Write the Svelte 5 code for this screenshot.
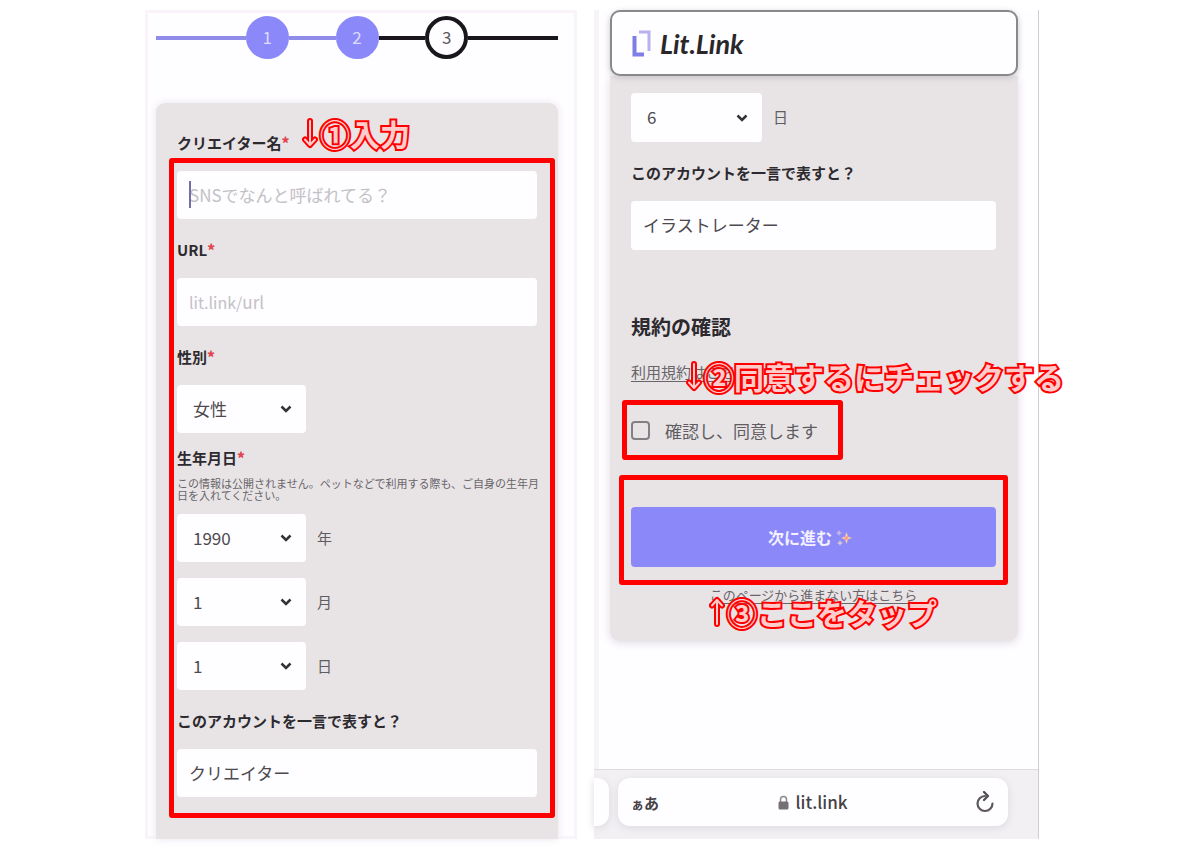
<script>
  let name = $state('');
  let url = $state('');
  let gender = $state('女性');
  let year = $state('1990');
  let month = $state('1');
  let day = $state('1');
  let about = $state('クリエイター');
  let otherDay = $state('6');
  let otherAbout = $state('イラストレーター');
  let agreed = $state(false);

  const range = (from, to) => Array.from({ length: to - from + 1 }, (_, i) => String(from + i));
  const years = range(1950, 2010);
  const months = range(1, 12);
  const days = range(1, 31);
</script>

{#snippet chevron()}
  <svg class="chevron" width="14" height="10" viewBox="0 0 14 10" aria-hidden="true">
    <path d="M2.5 2.5 L7 7 L11.5 2.5" fill="none" stroke="#353237" stroke-width="2.5" />
  </svg>
{/snippet}

{#snippet arrow(up)}
  <svg class="arrow" class:up width="16" height="32" viewBox="0 0 16 32" aria-hidden="true">
    <g fill="none" stroke-linejoin="round" stroke-linecap="round">
      <path d="M8 4 V27 M3 22.500 L8 28 L13 22.500" stroke="#f00" stroke-width="6" />
      <path d="M8 4 V27 M3 22.500 L8 28 L13 22.500" stroke="#fcc" stroke-width="2" />
    </g>
  </svg>
{/snippet}

<main class="page">
  <section class="panel first">
    <ol class="steps">
      <li class="line long done"></li>
      <li class="dot done">1</li>
      <li class="line done"></li>
      <li class="dot done">2</li>
      <li class="line"></li>
      <li class="dot">3</li>
      <li class="line long"></li>
    </ol>

    <form class="card">
      <div class="label-row">
        <label class="label" for="name">クリエイター名<b>*</b></label>
        <p class="callout one">{@render arrow(false)}①入力</p>
      </div>

      <div class="fields">
        <span class="frame around-fields"></span>
        <div class="control name">
          <span class="caret"></span>
          <input id="name" bind:value={name} placeholder="SNSでなんと呼ばれてる？" />
        </div>

        <label class="label" for="url">URL<b>*</b></label>
        <div class="control">
          <span class="prefix">lit.link/</span>
          <input id="url" bind:value={url} placeholder="url" />
        </div>

        <label class="label" for="gender">性別<b>*</b></label>
        <div class="select">
          <select id="gender" bind:value={gender}>
            <option>女性</option><option>男性</option><option>その他</option>
          </select>
          {@render chevron()}
        </div>

        <label class="label birth" for="year">生年月日<b>*</b></label>
        <p class="note">この情報は公開されません。ペットなどで利用する際も、ご自身の生年月<br />日を入れてください。</p>
        <div class="dates">
          <div class="date">
            <div class="select">
              <select id="year" bind:value={year}>
                {#each years as y}<option>{y}</option>{/each}
              </select>
              {@render chevron()}
            </div>
            <label for="year">年</label>
          </div>
          <div class="date">
            <div class="select">
              <select id="month" bind:value={month}>
                {#each months as m}<option>{m}</option>{/each}
              </select>
              {@render chevron()}
            </div>
            <label for="month">月</label>
          </div>
          <div class="date">
            <div class="select">
              <select id="day" bind:value={day}>
                {#each days as d}<option>{d}</option>{/each}
              </select>
              {@render chevron()}
            </div>
            <label for="day">日</label>
          </div>
        </div>

        <label class="label" for="about">このアカウントを一言で表すと？</label>
        <div class="control">
          <input id="about" bind:value={about} />
        </div>
      </div>
    </form>
  </section>

  <section class="panel second">
    <header class="brand">
      <svg width="19" height="27" viewBox="0 0 19 27" aria-hidden="true">
        <path d="M2.500 6 V24.500 H12" fill="none" stroke="#7f7de6" stroke-width="4" />
        <path d="M7 2 H17 V21" fill="none" stroke="#b5b2ee" stroke-width="3" />
      </svg>
      <span>Lit.Link</span>
    </header>

    <form class="card">
      <div class="date">
        <div class="select">
          <select id="other-day" bind:value={otherDay}>
            {#each days as d}<option>{d}</option>{/each}
          </select>
          {@render chevron()}
        </div>
        <label for="other-day">日</label>
      </div>

      <label class="label" for="other-about">このアカウントを一言で表すと？</label>
      <div class="control">
        <input id="other-about" bind:value={otherAbout} />
      </div>

      <h2>規約の確認</h2>
      <div class="terms">
        <a href="#terms">利用規約はこちら</a>
        <p class="callout two">{@render arrow(false)}②同意するにチェックする</p>
      </div>

      <div class="agree">
        <span class="frame around-agree"></span>
        <input id="agree" type="checkbox" bind:checked={agreed} />
        <label for="agree">確認し、同意します</label>
      </div>

      <div class="next">
        <span class="frame around-next"></span>
        <button type="button">
          次に進む
          <svg width="17" height="17" viewBox="0 0 17 17" aria-hidden="true">
            <path d="M10.500 3 L12 7.500 L16 9 L12 10.500 L10.500 15 L9 10.500 L5 9 L9 7.500 Z" fill="#f3cda6" />
            <circle cx="10.500" cy="9" r="2" fill="#f5a08f" />
            <path d="M3 1 L4 3 L6 4 L4 5 L3 7 L2 5 L0 4 L2 3 Z" fill="#c9b9dd" />
            <path d="M4 11 L5 13 L7 14 L5 15 L4 17 L3 15 L1 14 L3 13 Z" fill="#d9c6cf" />
          </svg>
        </button>
      </div>

      <div class="help">
        <a href="#help">このページから進まない方はこちら</a>
        <p class="callout three">{@render arrow(true)}③ここをタップ</p>
      </div>
    </form>

    <footer class="browser">
      <div class="previous"></div>
      <div class="address">
        <button type="button" class="reader" aria-label="表示設定"><small>ぁ</small>あ</button>
        <span class="site">
          <svg width="11" height="15" viewBox="0 0 11 15" aria-hidden="true">
            <path d="M2.500 7 V4.500 A3 3 0 0 1 8.500 4.500 V7" fill="none" stroke="#8b888c" stroke-width="1.500" />
            <rect x="0.500" y="6.500" width="10" height="8" rx="1.500" fill="#747075" />
          </svg>
          lit.link
        </span>
        <button type="button" class="reload" aria-label="再読み込み">
          <svg width="20" height="22" viewBox="0 0 20 22" aria-hidden="true">
            <path d="M10 5 A7.500 7.500 0 1 0 17.500 12.500" fill="none" stroke="#5b575c" stroke-width="2.200" stroke-linecap="round" />
            <path d="M9 1 L13 5 L9 9" fill="none" stroke="#4d494e" stroke-width="2.200" stroke-linecap="round" stroke-linejoin="round" />
          </svg>
        </button>
      </div>
    </footer>
  </section>
</main>

<style>
  :global(body) {
    background: #fff;
  }

  .page,
  .page * {
    box-sizing: border-box;
  }

  .page {
    display: grid;
    grid-template-columns: 432fr 445fr;
    gap: 17px;
    max-width: 910px;
    margin: 0 auto;
    padding: 10px 16px 9px 0;
    color: #2d2a2f;
    font-family: 'Noto Sans CJK JP', sans-serif;
    font-size: 17px;
  }

  p,
  h2,
  ol {
    margin: 0;
    padding: 0;
  }

  input,
  select,
  button {
    margin: 0;
    padding: 0;
    border: 0;
    background: none;
    color: inherit;
    font: inherit;
  }

  .panel {
    display: flex;
    flex-direction: column;
    min-width: 0;
    background: #fefdff;
  }

  .first {
    padding: 6px 19px 0 11px;
    box-shadow: inset 0 0 0 3px #f8f4fa;
  }

  .second {
    border-right: 1px solid #cfcdd0;
    border-left: 5px solid #f6f4f7;
  }

  .steps {
    display: flex;
    align-items: center;
    list-style: none;
  }

  .line {
    flex: 47;
    height: 4px;
    background: #19171b;
  }

  .line.long {
    flex: 90;
  }

  .line.done {
    background: #8f8de9;
  }

  .dot {
    display: grid;
    place-items: center;
    width: 43px;
    height: 43px;
    padding-bottom: 3px;
    border: 4px solid #19171b;
    border-radius: 50%;
    color: #5c595e;
  }

  .dot.done {
    border-color: #8b89fa;
    background: #8b89fa;
    color: #dddcfa;
  }

  .card {
    background: #e8e4e6;
  }

  .first .card {
    flex: 1;
    margin-top: 44px;
    padding: 29px 21px 42px;
    border-radius: 9px 9px 0 0;
    box-shadow: 0 0 8px #e9e5ee;
  }

  .second .card {
    margin: 0 20px 0 11px;
    padding: 17px 22px 36px 21px;
    border-radius: 0 0 10px 10px;
    box-shadow: 0 2px 8px #e0dce3;
  }

  .label-row,
  .fields,
  .terms,
  .agree,
  .next,
  .help,
  .name {
    position: relative;
  }

  .label {
    display: block;
    margin: 20px 0 17px;
    font-size: 15px;
    font-weight: 700;
    line-height: 22px;
  }

  .label-row .label {
    margin-top: 0;
  }

  .label b {
    color: #e0444e;
  }

  .label.birth {
    margin: 14px 0 8px;
  }

  .control {
    display: flex;
    align-items: center;
    height: 48px;
    padding: 0 12px 2px;
    border-radius: 4px;
    background: #fefdff;
  }

  .second .control,
  .second .select {
    height: 49px;
  }

  .control input {
    flex: 1;
    min-width: 0;
    height: 100%;
    color: #4d4a4f;
    outline: none;
  }

  .control input::placeholder {
    color: #c4c1c6;
    opacity: 1;
  }

  .prefix {
    padding-top: 2px;
    color: #c4c1c6;
    font-size: 16px;
  }

  .caret {
    position: absolute;
    top: 10px;
    left: 12px;
    width: 2px;
    height: 27px;
    background: #706da8;
  }

  .select {
    display: grid;
    align-items: center;
    width: 129px;
    height: 48px;
    border-radius: 4px;
    background: #fefdff;
  }

  .second .select {
    width: 131px;
  }

  .select select,
  .chevron {
    grid-area: 1 / 1;
  }

  .select select {
    width: 100%;
    height: 100%;
    padding: 0 0 2px 16px;
    appearance: none;
    color: #4d4a4f;
  }

  .chevron {
    justify-self: end;
    margin-right: 13px;
    pointer-events: none;
  }

  .note {
    color: #69656a;
    font-size: 11px;
    line-height: 12px;
    white-space: nowrap;
  }

  .dates {
    display: grid;
    gap: 16px;
    margin-top: 13px;
  }

  .date {
    display: flex;
    align-items: center;
    gap: 11px;
    color: #605c61;
    font-size: 15px;
  }

  .date > label {
    padding-bottom: 2px;
  }

  .date select {
    font-size: 17px;
  }

  .frame {
    position: absolute;
    border: 5px solid #f00;
    border-radius: 3px;
    pointer-events: none;
  }

  .around-fields {
    inset: -13px -18px -21px -8px;
  }

  .around-agree {
    inset: -16px -25px -16px -9px;
  }

  .around-next {
    inset: -32px -12px -18px;
  }

  .callout {
    position: absolute;
    z-index: 1;
    display: flex;
    align-items: center;
    gap: 2px;
    color: #fcc;
    font-size: 30px;
    font-weight: 700;
    line-height: 40px;
    white-space: nowrap;
    -webkit-text-stroke: 4px #f00;
    paint-order: stroke fill;
  }

  .arrow.up {
    transform: rotate(180deg);
  }

  .callout.one {
    top: -19px;
    left: 125px;
  }

  .callout.two {
    top: -5px;
    left: 55px;
  }

  .callout.three {
    top: 7px;
    left: 78px;
  }

  .brand {
    position: relative;
    display: flex;
    align-items: center;
    gap: 9px;
    height: 66px;
    margin: 0 20px 0 11px;
    padding-left: 20px;
    border: 2px solid #8b888c;
    border-radius: 10px;
    background: #fefdff;
    box-shadow: 0 2px 6px #c9c5ca;
    color: #2a272b;
    font-family: Lato, sans-serif;
    font-size: 27px;
    font-style: italic;
    font-weight: 700;
  }

  h2 {
    margin: 63px 0 20px;
    font-size: 20px;
    line-height: 28px;
  }

  a {
    color: #69656a;
    text-underline-offset: 3px;
  }

  .terms {
    font-size: 15px;
    line-height: 22px;
  }

  .agree {
    display: flex;
    align-items: center;
    gap: 15px;
    width: fit-content;
    height: 28px;
    margin-top: 33px;
    color: #605c61;
  }

  .agree input {
    width: 19px;
    height: 19px;
    border: 2px solid #838085;
    border-radius: 4px;
    appearance: none;
  }

  .agree input:checked {
    background: #8b89fa;
  }

  .next {
    margin-top: 63px;
  }

  .next button {
    display: flex;
    align-items: center;
    justify-content: center;
    gap: 4px;
    width: 100%;
    height: 60px;
    padding-right: 6px;
    border-radius: 4px;
    background: #8b89fa;
    color: #f3f1ff;
    font-size: 16px;
    font-weight: 700;
  }

  .help {
    margin-top: 18px;
    font-size: 13px;
    line-height: 20px;
    text-align: center;
  }

  .browser {
    display: flex;
    gap: 9px;
    margin: auto 0 0 -5px;
    padding: 8px 30px 13px 0;
    border-top: 1px solid #dfdce0;
    background: #f3f0f4;
  }

  .previous,
  .address {
    height: 48px;
    background: #fefdff;
    box-shadow: 0 2px 8px #dcd9de;
  }

  .previous {
    width: 15px;
    border-radius: 0 12px 12px 0;
  }

  .address {
    display: grid;
    flex: 1;
    grid-template-columns: 1fr auto 1fr;
    align-items: center;
    padding: 0 13px;
    border-radius: 12px;
  }

  .reader {
    justify-self: start;
    color: #454146;
    font-size: 15px;
    font-weight: 700;
  }

  .reader small {
    font-size: 13px;
  }

  .site {
    display: flex;
    align-items: center;
    gap: 6px;
    color: #454146;
    font-family: 'Noto Sans CJK JP', sans-serif;
    font-size: 17px;
    line-height: 20px;
    font-weight: 500;
  }

  .reload {
    display: flex;
    justify-self: end;
  }
</style>
